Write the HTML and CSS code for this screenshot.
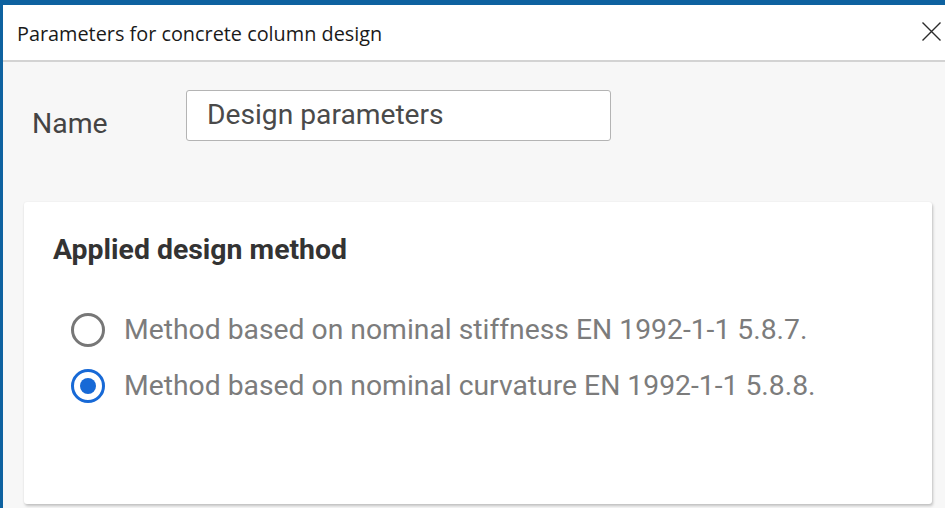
FILE: index.html
```html
<!DOCTYPE html>
<html lang="en">
<head>
<meta charset="utf-8">
<title>Parameters for concrete column design</title>
<link rel="stylesheet" href="styles.css">
</head>
<body>
<div class="dialog">
  <header class="titlebar">
    <span class="title">Parameters for concrete column design</span>
    <svg class="close" width="19" height="19" viewBox="0 0 19 19" aria-label="Close">
      <path d="M0.5 0.5 L18.5 18.5 M18.5 0.5 L0.5 18.5" stroke="#2b2b2b" stroke-width="1.4" fill="none"/>
    </svg>
  </header>
  <main class="content">
    <div class="name-row">
      <label class="name-label">Name</label>
      <div class="name-input">Design parameters</div>
    </div>
    <section class="card">
      <h2 class="card-title">Applied design method</h2>
      <div class="options">
        <div class="option">
          <span class="radio"></span>
          <span class="option-text">Method based on nominal stiffness EN 1992-1-1 5.8.7.</span>
        </div>
        <div class="option">
          <span class="radio checked"></span>
          <span class="option-text">Method based on nominal curvature EN 1992-1-1 5.8.8.</span>
        </div>
      </div>
    </section>
  </main>
</div>
</body>
</html>
```
FILE: styles.css
```css
html, body {
  margin: 0;
  padding: 0;
  width: 945px;
  height: 508px;
  overflow: hidden;
}
body {
  background: #0e62a0;
  padding: 5px 0 0 3px;
  box-sizing: border-box;
}
.dialog {
  width: 942px;
  height: 503px;
  background: #f7f7f7;
  display: flex;
  flex-direction: column;
  overflow: hidden;
}
.titlebar {
  height: 55px;
  flex: none;
  background: #ffffff;
  border-bottom: 2px solid #d3d3d3;
  display: flex;
  align-items: center;
  justify-content: space-between;
  padding: 0 4px 0 14px;
}
.title {
  font-family: "Open Sans", "Noto Sans", sans-serif;
  font-size: 19.85px;
  color: #1a1a1a;
  margin-top: 1px;
}
.close {
  display: block;
  margin-top: -2px;
}
.content {
  flex: 1;
  padding: 28px 0 0 21px;
  font-family: Roboto, "Liberation Sans", sans-serif;
}
.name-row {
  display: flex;
  align-items: flex-start;
  padding-left: 8px;
}
.name-label {
  width: 154px;
  font-size: 28.4px;
  color: #444444;
  padding-top: 18px;
  line-height: 32px;
}
.name-input {
  width: 425px;
  height: 51px;
  box-sizing: border-box;
  border: 1px solid #b4b4b4;
  border-radius: 3px;
  background: #ffffff;
  padding: 8px 0 0 20px;
  font-size: 28.2px;
  line-height: 32px;
  color: #4a4a4a;
}
.card {
  margin-top: 61px;
  width: 908px;
  height: 302px;
  box-sizing: border-box;
  background: #ffffff;
  border-radius: 3px;
  box-shadow: 1px 2px 3px rgba(0,0,0,0.22), 0 0 2px rgba(0,0,0,0.06);
  padding: 32px 0 0 29px;
}
.card-title {
  margin: 0;
  font-size: 28.4px;
  font-weight: 700;
  line-height: 32px;
  color: #333333;
}
.options {
  margin-top: 44px;
  display: flex;
  flex-direction: column;
  gap: 16px;
}
.option {
  display: flex;
  align-items: center;
  height: 40px;
  padding-left: 18px;
  gap: 19px;
}
.radio {
  width: 34px;
  height: 34px;
  box-sizing: border-box;
  border: 3px solid #777777;
  border-radius: 50%;
  flex: none;
  display: flex;
  align-items: center;
  justify-content: center;
}
.radio.checked {
  border-color: #1769d6;
}
.radio.checked::after {
  content: "";
  width: 16px;
  height: 16px;
  border-radius: 50%;
  background: #1769d6;
}
.option-text {
  font-size: 28.3px;
  line-height: 32px;
  color: #7c7c7c;
}
```
